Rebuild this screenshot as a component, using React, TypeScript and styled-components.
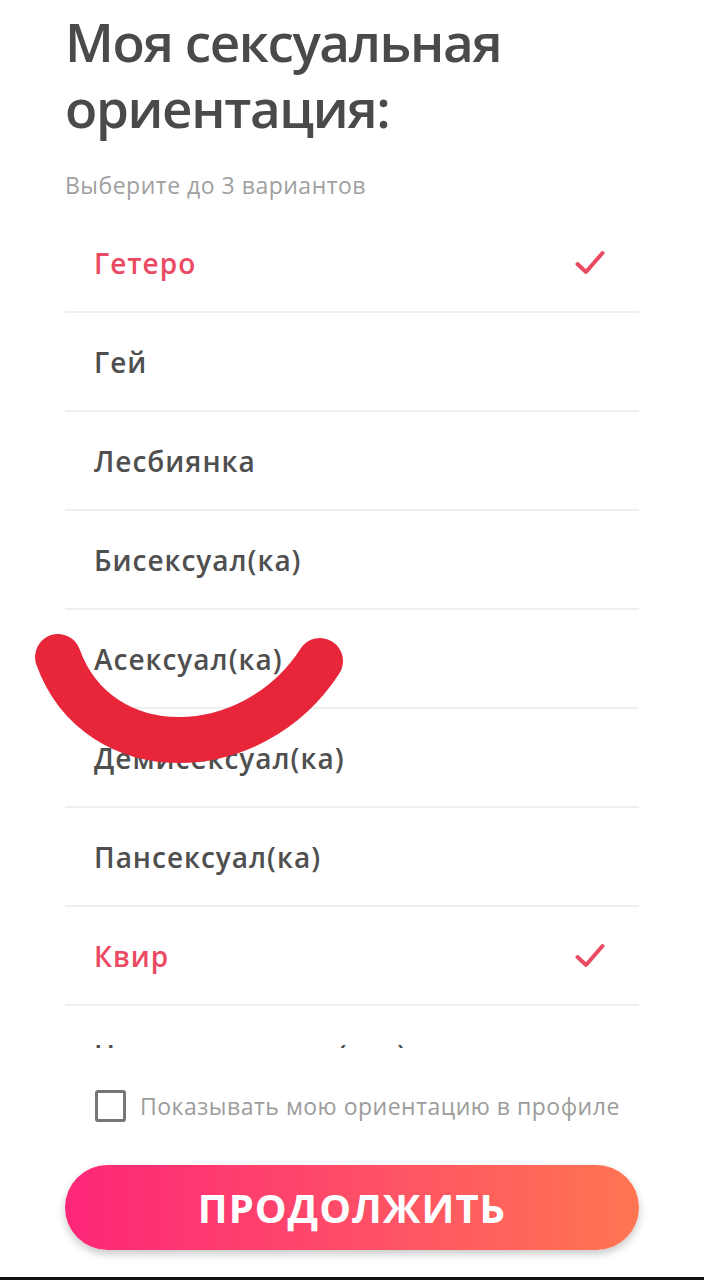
import React from "react";
import styled, { createGlobalStyle } from "styled-components";

const GlobalStyle = createGlobalStyle`
  html, body { margin: 0; padding: 0; background: #ffffff; }
  body { font-family: "Open Sans", "Noto Sans", sans-serif; -webkit-font-smoothing: antialiased; }
  * { box-sizing: border-box; }
`;

const Page = styled.div`
  position: relative;
  width: 704px;
  height: 1280px;
  display: flex;
  flex-direction: column;
  overflow: hidden;
  background: #ffffff;
`;

const Content = styled.div`
  display: flex;
  flex-direction: column;
  padding: 0 65px;
`;

const Title = styled.h1`
  margin: 9px 0 0;
  font-size: 53px;
  line-height: 66px;
  font-weight: 600;
  color: #4a4a4a;
  letter-spacing: -1.4px;
`;

const Subtitle = styled.p`
  margin: 29px 0 0;
  font-size: 23px;
  line-height: 30px;
  color: #a0a0a0;
  font-weight: 400;
  letter-spacing: 0.5px;
`;

const List = styled.ul`
  list-style: none;
  margin: 14px 0 0;
  padding: 0;
  height: 834px;
  overflow: hidden;
`;

const Row = styled.li<{ $selected?: boolean }>`
  display: flex;
  align-items: center;
  justify-content: space-between;
  height: 99px;
  padding: 0 34px 0 29px;
  border-bottom: 2px solid #efefef;
  font-size: 28px;
  font-weight: 600;
  letter-spacing: 1px;
  color: ${(p) => (p.$selected ? "#ea4a62" : "#4f4f4f")};
`;

const Check = styled.svg`
  width: 30px;
  height: 26px;
  flex: none;
`;

const CheckRow = styled.label`
  display: flex;
  align-items: center;
  gap: 14px;
  margin-top: 42px;
  padding-left: 30px;
  height: 32px;
`;

const Box = styled.span`
  width: 31px;
  height: 32px;
  border: 3px solid #767676;
  border-radius: 3px;
  flex: none;
`;

const CheckText = styled.span`
  font-size: 23px;
  color: #9c9c9c;
  font-weight: 400;
  letter-spacing: 0.5px;
  white-space: nowrap;
`;

const Button = styled.button`
  margin-top: 43px;
  width: 574px;
  height: 85px;
  border: none;
  border-radius: 43px;
  background: linear-gradient(90deg, #fd2678 0%, #fe4d68 50%, #ff7651 100%);
  box-shadow: 0 4px 9px rgba(0, 0, 0, 0.22);
  color: #ffffff;
  font-family: "Open Sans", "Noto Sans", sans-serif;
  font-size: 40px;
  font-weight: 700;
  letter-spacing: 1px;
  display: flex;
  align-items: center;
  justify-content: center;
`;

const BottomBar = styled.div`
  margin-top: auto;
  height: 3px;
  background: #111111;
`;

const Scribble = styled.svg`
  position: absolute;
  left: 0;
  top: 0;
  width: 704px;
  height: 1280px;
  pointer-events: none;
`;

const options: { label: string; selected?: boolean }[] = [
  { label: "Гетеро", selected: true },
  { label: "Гей" },
  { label: "Лесбиянка" },
  { label: "Бисексуал(ка)" },
  { label: "Асексуал(ка)" },
  { label: "Демисексуал(ка)" },
  { label: "Пансексуал(ка)" },
  { label: "Квир", selected: true },
  { label: "Не определился(ась)" },
];

const CheckIcon = () => (
  <Check viewBox="0 0 30 26">
    <path
      d="M2.5 14 L11 22 L27.5 3"
      fill="none"
      stroke="#ea4a62"
      strokeWidth="4"
      strokeLinecap="round"
      strokeLinejoin="round"
    />
  </Check>
);

export default function App() {
  return (
    <>
      <GlobalStyle />
      <Page>
        <Content>
          <Title>
            Моя сексуальная
            <br />
            ориентация:
          </Title>
          <Subtitle>Выберите до 3 вариантов</Subtitle>
          <List>
            {options.map((o) => (
              <Row key={o.label} $selected={o.selected}>
                <span>{o.label}</span>
                {o.selected && <CheckIcon />}
              </Row>
            ))}
          </List>
          <CheckRow>
            <Box />
            <CheckText>Показывать мою ориентацию в профиле</CheckText>
          </CheckRow>
          <Button>ПРОДОЛЖИТЬ</Button>
        </Content>
        <BottomBar />
        <Scribble viewBox="0 0 704 1280">
          <path
            d="M58 657 C 98 768, 252 766, 320 661"
            fill="none"
            stroke="#e8263a"
            strokeWidth="46"
            strokeLinecap="round"
          />
        </Scribble>
      </Page>
    </>
  );
}
